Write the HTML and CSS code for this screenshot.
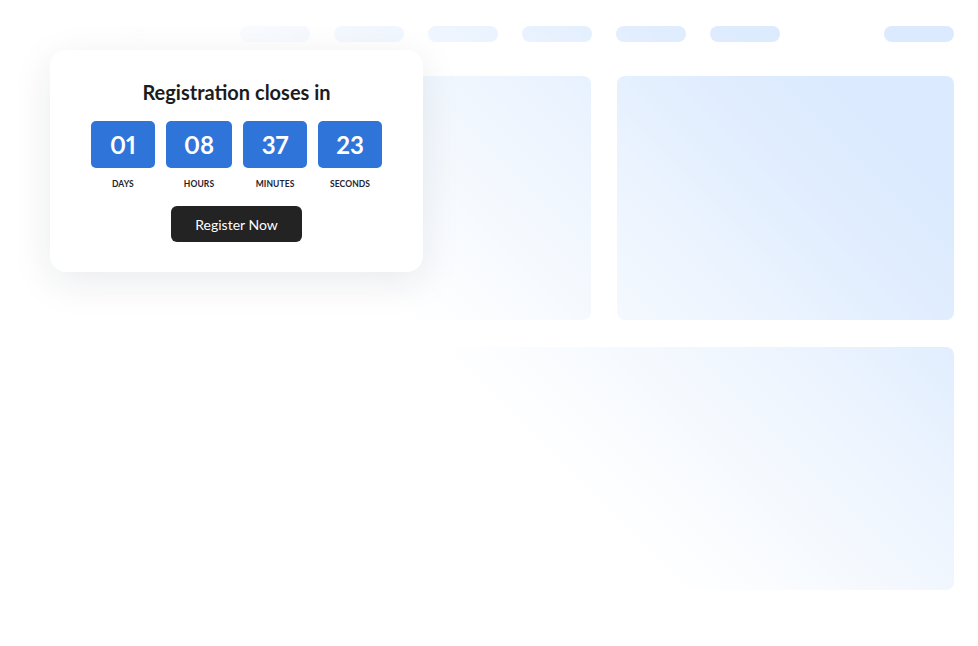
FILE: index.html
```html
<!DOCTYPE html>
<html lang="en">
<head>
<meta charset="utf-8">
<title>Registration closes in</title>
<link rel="stylesheet" href="styles.css">
</head>
<body>
<div class="page">
  <div class="skeleton">
    <div class="nav">
      <div class="brand"></div>
      <div class="links">
        <span class="pill"></span>
        <span class="pill"></span>
        <span class="pill"></span>
        <span class="pill"></span>
        <span class="pill"></span>
        <span class="pill"></span>
      </div>
      <span class="pill pill-right"></span>
    </div>
    <div class="grid">
      <div class="block"></div>
      <div class="block"></div>
      <div class="block block-wide"></div>
    </div>
  </div>
  <div class="fade"></div>
  <div class="popup">
    <h2 class="title">Registration closes in</h2>
    <div class="countdown">
      <div class="unit"><div class="num">01</div><div class="label">DAYS</div></div>
      <div class="unit"><div class="num">08</div><div class="label">HOURS</div></div>
      <div class="unit"><div class="num">37</div><div class="label">MINUTES</div></div>
      <div class="unit"><div class="num">23</div><div class="label">SECONDS</div></div>
    </div>
    <button class="cta">Register Now</button>
  </div>
</div>
</body>
</html>
```

FILE: styles.css
```css
* { box-sizing: border-box; }
html, body { margin: 0; padding: 0; background: #ffffff; }
body { font-family: "Lato", "Noto Sans", sans-serif; }

.page {
  position: relative;
  width: 978px;
  height: 646px;
  overflow: hidden;
}

.skeleton {
  padding: 26px 24px 0 24px;
}

.nav {
  display: flex;
  align-items: center;
  height: 16px;
}
.brand {
  width: 120px;
  height: 16px;
  margin-right: 96px;
  border-radius: 8px;
  background: #dbeafe;
}
.links {
  display: flex;
  gap: 24px;
}
.pill {
  display: block;
  width: 70px;
  height: 16px;
  border-radius: 8px;
  background: #dbeafe;
}
.pill-right { margin-left: auto; }

.grid {
  display: grid;
  grid-template-columns: 567px 337px;
  grid-template-rows: 244px 243px;
  column-gap: 26px;
  row-gap: 27px;
  margin-top: 34px;
}
.block {
  border-radius: 8px;
  background: #dbeafe;
}
.block-wide { grid-column: 1 / 3; }

.fade {
  position: absolute;
  inset: 0;
  background: linear-gradient(45deg, #ffffff 0, #ffffff 520px, rgba(255,255,255,0.6) 720px, rgba(255,255,255,0.15) 900px, rgba(255,255,255,0) 1000px);
}

.popup {
  position: absolute;
  left: 50px;
  top: 50px;
  width: 373px;
  height: 222px;
  background: #ffffff;
  border-radius: 16px;
  box-shadow: 0 10px 40px rgba(20, 30, 50, 0.09);
  padding: 30px 0 0 0;
  display: flex;
  flex-direction: column;
  align-items: center;
  z-index: 2;
}

.title {
  margin: 0;
  font-size: 20px;
  line-height: 24px;
  font-weight: 700;
  color: #1c1c1e;
}

.countdown {
  display: flex;
  gap: 11px;
  margin-top: 17px;
}
.unit {
  display: flex;
  flex-direction: column;
  align-items: center;
}
.num {
  height: 47px;
  min-width: 64px;
  padding: 0 18px;
  border-radius: 5px;
  background: #2f74d9;
  color: #ffffff;
  font-size: 24px;
  font-weight: 700;
  line-height: 47px;
  text-align: center;
  font-variant-numeric: proportional-nums;
}
.label {
  margin-top: 11px;
  font-size: 8.5px;
  line-height: 10px;
  font-weight: 700;
  color: #1f2330;
  letter-spacing: 0.1px;
}

.cta {
  margin-top: 17px;
  width: 131px;
  height: 36px;
  border: 0;
  border-radius: 6px;
  background: #232323;
  color: #ffffff;
  font-family: "Lato", "Noto Sans", sans-serif;
  font-size: 14px;
  font-weight: 400;
  padding: 0;
}
```
